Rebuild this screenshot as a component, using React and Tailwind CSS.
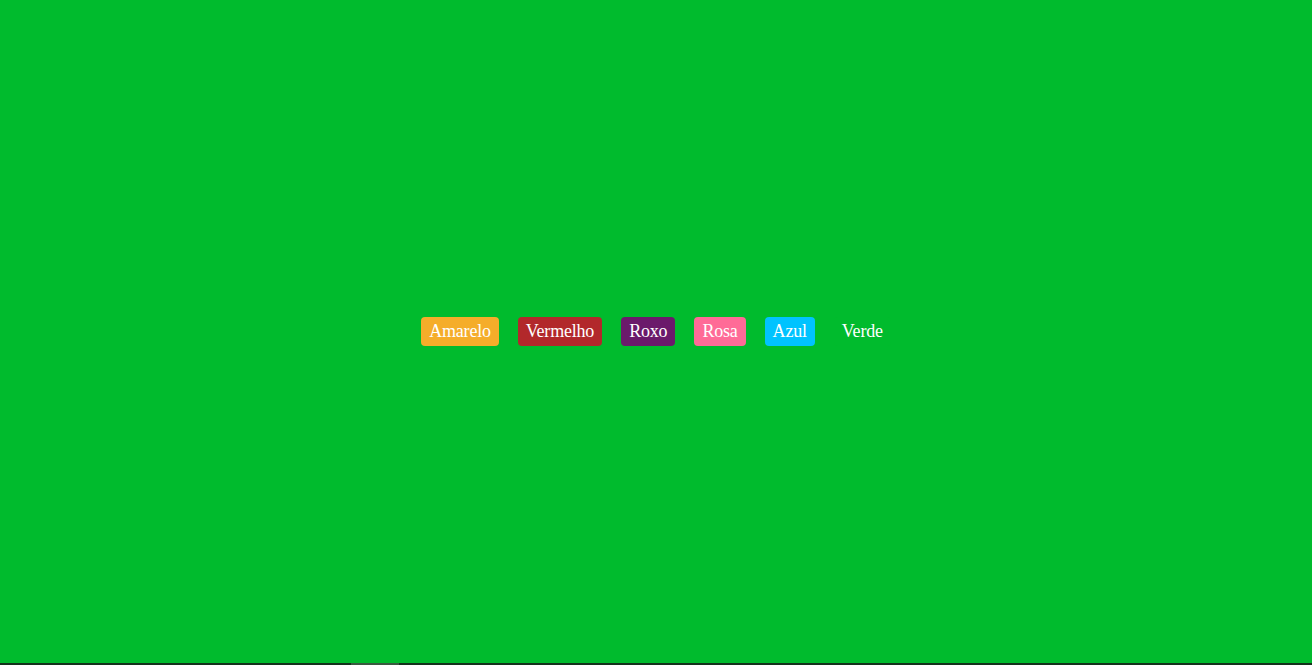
import React from 'react'

const colors = [
  { name: 'Amarelo', bg: 'bg-[#f5ad2a]' },
  { name: 'Vermelho', bg: 'bg-[#b2282b]' },
  { name: 'Roxo', bg: 'bg-[#6b1a6b]' },
  { name: 'Rosa', bg: 'bg-[#ff6b97]' },
  { name: 'Azul', bg: 'bg-[#00c3ff]' },
  { name: 'Verde', bg: 'bg-[#00bb2d]' },
]

const App = () => {
  return (
    <main className="bg-[#00bb2d] h-[665px] flex flex-col font-['Liberation_Serif',serif]">
      <section className="flex-1 flex items-center justify-center gap-[19px]">
        {colors.map(c => (
          <button
            key={c.name}
            className={`${c.bg} text-white text-[18px] tracking-[-0.2px] leading-[29px] h-[29px] px-2 rounded-[4px]`}
          >
            {c.name}
          </button>
        ))}
      </section>
      <div className="h-[2px] bg-[#15331c] flex">
        <div className="ml-[351px] w-[48px] bg-[#3a5a40]"></div>
      </div>
    </main>
  )
}

export default App
